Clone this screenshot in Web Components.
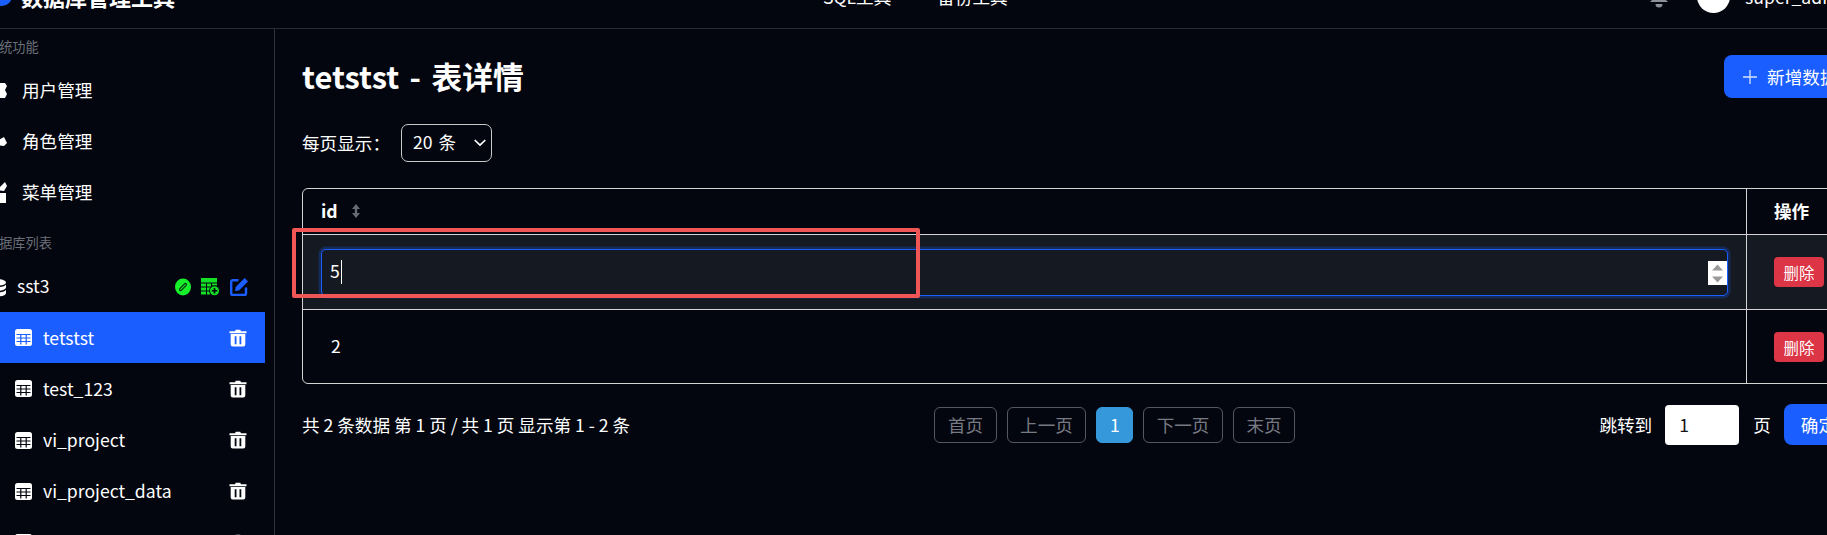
<!DOCTYPE html>
<html lang="zh">
<head>
<meta charset="utf-8">
<title>tetstst - 表详情</title>
<style>
  html, body { margin: 0; height: 535px; overflow: hidden; background: #03060f; }
  body { color: #fff; font-family: "Noto Sans CJK SC", "Noto Sans", sans-serif; font-size: 17.6px; }
</style>
</head>
<body>
<app-shell>
  <app-header slot="header"></app-header>
  <side-bar slot="side"></side-bar>
  <table-page slot="main"></table-page>
</app-shell>

<script>
const icons = {
  table: (line) => `<svg width="17" height="17" viewBox="0 0 17 17"><rect width="17" height="17" rx="2.5" fill="#fff"/><path d="M1.5 5.5h14M1.5 9h14M1.5 12.5h14M5.8 5.5v10M11.2 5.5v10" stroke="${line}" stroke-width="1.2" fill="none"/></svg>`,
  trash: `<svg width="18" height="18" viewBox="0 0 18 18"><path d="M6 2.200 6.800.8h4.400l.8 1.400h5.500v2H.5v-2z" fill="#fff"/><path fill="#fff" fill-rule="evenodd" d="M1.700 5h14.600v10.600a2 2 0 0 1-2 2H3.700a2 2 0 0 1-2-2zM5.700 7.200v8h1.800v-8zm4.800 0v8h1.800v-8z"/></svg>`,
  link: `<svg width="16" height="18" viewBox="0 0 16 18"><ellipse cx="8" cy="9" rx="8" ry="8.500" fill="#16f02a"/><path d="M5.700 11.400l4.600-4.800" stroke="#0b2a12" stroke-width="3.400" stroke-linecap="round"/><path d="M5.700 11.400l4.600-4.800" stroke="#16f02a" stroke-width="1.200" stroke-linecap="round"/></svg>`,
  tablePlus: `<svg width="19" height="18" viewBox="0 0 19 18"><path fill="#14e026" fill-rule="evenodd" d="M0 0h16v4.500H0zM0 5.500h5v3H0zm6 0h4v3H6zm5 0h5v2h-5zM0 9.500h5v3H0zm6 0h3v3H6zM0 13.500h5v3H0zm6 0h3v3H6z"/><circle cx="13.500" cy="12.800" r="5" fill="#14e026" stroke="#03060f" stroke-width="1"/><path d="M13.500 10v5.600M10.700 12.800h5.600" stroke="#03060f" stroke-width="1.600"/></svg>`,
  edit: `<svg width="18" height="18" viewBox="0 0 18 18"><path d="M8.500 2.200H2.800A1.600 1.600 0 0 0 1.200 3.800v11.600A1.600 1.600 0 0 0 2.800 17h11.600a1.600 1.600 0 0 0 1.600-1.600V9.500" fill="none" stroke="#1a5eff" stroke-width="2.400"/><path d="M14.600 0 18 3.400 9 12.400l-4 .7.700-4z" fill="#1a5eff"/></svg>`,
  db: `<svg width="18" height="18" viewBox="0 0 18 18" fill="#fff"><ellipse cx="9" cy="3.400" rx="8" ry="3.200"/><path d="M1 5.600c1.200 1.800 4.400 2.600 8 2.600s6.800-.8 8-2.600v3c0 1.800-3.600 3.200-8 3.200s-8-1.400-8-3.200z"/><path d="M1 10.800c1.200 1.800 4.400 2.600 8 2.600s6.800-.8 8-2.600v3.400c0 1.800-3.600 3.200-8 3.200s-8-1.400-8-3.200z"/></svg>`,
  users: `<svg width="18" height="18" viewBox="0 0 18 18" fill="#fff"><path d="M8 2h8l2 3-2 4 2 4-2 4H8z"/></svg>`,
  role: `<svg width="18" height="18" viewBox="0 0 18 18" fill="#fff"><path d="M8 9l7-4 3 6-3 3-7-1z"/></svg>`,
  menu: `<svg width="18" height="22" viewBox="0 0 18 22" fill="#fff"><path d="M8 9l8-8 2 4-3 5z"/><path d="M8 12h9v10H8z"/></svg>`,
  plus: `<svg width="14" height="14" viewBox="0 0 14 14"><path d="M7 0v14M0 7h14" stroke="#d8e4ff" stroke-width="1.300"/></svg>`,
  chevron: `<svg width="12" height="8" viewBox="0 0 12 8"><path d="M1.200 1.500 6 6.200l4.800-4.700" fill="none" stroke="#fff" stroke-width="1.700" stroke-linecap="round" stroke-linejoin="round"/></svg>`,
  sort: `<svg width="8" height="14" viewBox="0 0 8 14" fill="#666a72"><path d="M4 0l4 5H5.200v4H8l-4 5-4-5h2.800V5H0z"/></svg>`,
  spin: `<svg width="19" height="24" viewBox="0 0 19 24"><rect width="19" height="24" fill="#fff"/><path d="M9.500 3.500 15 9.500H4zM4 15.500h11L9.500 21.500z" fill="#9a9a9a"/></svg>`,
  bell: `<svg width="20" height="22" viewBox="0 0 20 22" fill="#8b8f98"><path d="M10 0a6 6 0 0 0-6 6v6l-3 3h18l-3-3V6a6 6 0 0 0-6-6z"/><path d="M6.500 17h7a3.500 3.500 0 0 1-7 0z"/></svg>`,
  logo: `<svg width="26" height="20" viewBox="0 0 26 20"><path d="M0 0h26v10a10 10 0 0 1-10 10H0z" fill="#1a5eff"/></svg>`
};

class AppShell extends HTMLElement {
  constructor() {
    super();
    this.attachShadow({ mode: "open" }).innerHTML = `
      <style>
        :host { display: block; width: 1905px; margin: -36px 0 0 -25px; }
        .body { display: flex; height: 506px; overflow: hidden; }
      </style>
      <slot name="header"></slot>
      <div class="body"><slot name="side"></slot><slot name="main"></slot></div>`;
  }
}

class AppHeader extends HTMLElement {
  constructor() {
    super();
    this.attachShadow({ mode: "open" }).innerHTML = `
      <style>
        :host { display: flex; align-items: center; height: 64px; border-bottom: 1px solid #282b37; box-sizing: content-box; }
        .brand { display: flex; align-items: center; gap: 9px; width: 600px; padding-left: 11px; box-sizing: border-box; font-size: 22px; font-weight: 700; }
        nav { display: flex; gap: 46px; margin-left: 248px; }
        .user { display: flex; align-items: center; margin-left: auto; padding-right: 26px; }
        .user svg { margin-top: 3px; margin-right: 28px; }
        .avatar { width: 33px; height: 33px; border-radius: 50%; background: #fff; margin-right: 15px; }
      </style>
      <div class="brand">${icons.logo}<span>数据库管理工具</span></div>
      <nav><span>SQL工具</span><span>备份工具</span></nav>
      <div class="user">${icons.bell}<span class="avatar"></span><span>super_admin</span></div>`;
  }
}

class SideItem extends HTMLElement {
  constructor() {
    super();
    this.attachShadow({ mode: "open" }).innerHTML = `
      <style>
        :host { display: flex; align-items: center; height: 51.200px; color: #fff; }
        :host([active]) { background: #1a5eff; }
        .text { flex: 1; min-width: 0; padding-bottom: 1px; }
        .lead { display: flex; width: 28px; margin-left: 40px; }
        :host([kind="sys"]) .lead { margin-left: 14px; width: 33px; }
        .trail { display: flex; padding-right: 18px; }
      </style>
      <span class="lead"><slot name="icon"></slot></span>
      <span class="text"><slot></slot></span>
      <span class="trail"><slot name="action"></slot></span>`;
  }
}

class SideBar extends HTMLElement {
  constructor() {
    super();
    const tables = ["tetstst", "test_123", "vi_project", "vi_project_data", "vi_project_log"];
    this.attachShadow({ mode: "open" }).innerHTML = `
      <style>
        :host { display: block; flex: none; width: 300px; height: 100%; border-right: 1px solid #2f3340; box-sizing: border-box; padding-right: 9px; overflow: hidden; }
        .label { color: #6c6f78; font-size: 13.200px; line-height: 18px; padding-left: 11px; }
        .label.a { margin-top: 9px; margin-bottom: 8px; }
        .label.b { margin-top: 16px; margin-bottom: 13px; }
        .db { display: flex; align-items: center; height: 46.600px; padding: 0 17px 0 14px; gap: 8px; margin-bottom: 1px; }
        .db b { font-weight: 400; flex: 1; font-size: 17.600px; margin-left: 2px; padding-bottom: 5px; }
        .db .tools { display: flex; gap: 10px; align-items: center; padding-bottom: 1px; }
        svg { display: block; }
      </style>
      <div class="label a">系统功能</div>
      <side-item kind="sys"><span slot="icon">${icons.users}</span>用户管理</side-item>
      <side-item kind="sys"><span slot="icon">${icons.role}</span>角色管理</side-item>
      <side-item kind="sys"><span slot="icon">${icons.menu}</span>菜单管理</side-item>
      <div class="label b">数据库列表</div>
      <div class="db">${icons.db}<b>sst3</b><span class="tools">${icons.link}${icons.tablePlus}${icons.edit}</span></div>
      ${tables.map((t, i) => `<side-item ${i === 0 ? "active" : ""}><span slot="icon">${icons.table(i === 0 ? "#1a5eff" : "#03060f")}</span>${t}<span slot="action">${icons.trash}</span></side-item>`).join("")}`;
  }
}

class DataTable extends HTMLElement {
  constructor() {
    super();
    this.attachShadow({ mode: "open" }).innerHTML = `
      <style>
        :host { display: grid; grid-template-columns: 1fr 106px; grid-template-rows: 45px 75px 74px; border: 1px solid #d4d4d4; border-radius: 6px; overflow: hidden; }
        .c { display: flex; align-items: center; box-sizing: border-box; padding: 0 18px; border-top: 1px solid #d4d4d4; min-width: 0; }
        .c.h { border-top: 0; font-weight: 700; gap: 14px; padding-bottom: 2px; }
        .c.act { border-left: 1px solid #d4d4d4; padding: 0 0 0 27px; }
        .c.h.act { padding-bottom: 2px; }
        .edit { background: #151921; }
        .box { position: relative; flex: 1; height: 47px; box-sizing: border-box; border: 1px solid #1a5eff; border-radius: 5px; background: #151921; box-shadow: 0 0 0 2.500px rgba(26, 94, 255, .25); display: flex; align-items: center; padding-left: 8px; }
        .five { padding-bottom: 3px; }
        .caret { width: 1px; height: 24px; background: #fff; margin-left: 1px; }
        .spin { position: absolute; right: 0; top: 11px; display: block; }
        .del { width: 50px; height: 30px; border-radius: 4px; background: #dc3545; font-size: 15.400px; display: flex; align-items: center; justify-content: center; }
        .val { padding-left: 10px; padding-bottom: 3px; }
      </style>
      <div class="c h">id ${icons.sort}</div>
      <div class="c h act">操作</div>
      <div class="c edit"><div class="box"><span class="five">5</span><span class="caret"></span><span class="spin">${icons.spin}</span></div></div>
      <div class="c act edit"><span class="del">删除</span></div>
      <div class="c"><span class="val">2</span></div>
      <div class="c act"><span class="del">删除</span></div>`;
  }
}

class PagerBar extends HTMLElement {
  constructor() {
    super();
    this.attachShadow({ mode: "open" }).innerHTML = `
      <style>
        :host { display: flex; align-items: center; justify-content: space-between; height: 41px; }
        .pages { display: flex; gap: 10px; }
        .p { height: 36px; box-sizing: border-box; border: 1px solid #555861; border-radius: 6px; color: #777a82; padding: 0 12.500px; display: flex; align-items: center; }
        .p.on { background: #3498db; border-color: #3498db; color: #fff; padding: 0 12.500px; }
        .jump { display: flex; align-items: center; }
        .num { width: 74px; height: 40px; box-sizing: border-box; margin: 0 14px 0 13px; background: #fff; color: #111; border-radius: 4px; padding-left: 14px; display: flex; align-items: center; }
        .go { height: 41px; margin-left: 13px; background: #1a5eff; border-radius: 8px; padding: 0 17px; display: flex; align-items: center; }
      </style>
      <span>共 2 条数据 第 1 页 / 共 1 页 显示第 1 - 2 条</span>
      <div class="pages">
        <span class="p">首页</span><span class="p">上一页</span><span class="p on">1</span><span class="p">下一页</span><span class="p">末页</span>
      </div>
      <div class="jump"><span>跳转到</span><span class="num">1</span><span>页</span><span class="go">确定</span></div>`;
  }
}

class TablePage extends HTMLElement {
  constructor() {
    super();
    this.attachShadow({ mode: "open" }).innerHTML = `
      <style>
        :host { display: block; flex: 1; min-width: 0; padding: 26px 27px 0; position: relative; }
        .top { display: flex; align-items: center; justify-content: space-between; height: 43px; }
        h1 { margin: 0; font-size: 30.800px; line-height: 43px; font-weight: 700; word-spacing: 3.500px; padding-bottom: 2px; }
        .add { display: flex; align-items: center; gap: 10px; height: 43px; padding: 0 15.500px 0 19px; background: #1a5eff; border-radius: 8px; }
        .size { display: flex; align-items: center; gap: 11px; margin: 26px 0; height: 38px; }
        .size > span:first-child { padding-bottom: 2px; }
        .sel { display: flex; align-items: center; justify-content: space-between; width: 91px; height: 38px; box-sizing: border-box; border: 1px solid #c9c9c9; border-radius: 7px; padding: 0 5px 3px 11px; word-spacing: 2px; }
        .sel svg { margin-top: 3px; }
        pager-bar { margin-top: 20px; }
        .mark { position: absolute; left: 17px; top: 199px; width: 628px; height: 70px; box-sizing: border-box; border: 4px solid #f05656; border-radius: 2px; }
      </style>
      <div class="top"><h1>tetstst - 表详情</h1><span class="add">${icons.plus}新增数据</span></div>
      <div class="size"><span>每页显示：</span><span class="sel">20 条${icons.chevron}</span></div>
      <data-table></data-table>
      <pager-bar></pager-bar>
      <div class="mark"></div>`;
  }
}

customElements.define("app-shell", AppShell);
customElements.define("app-header", AppHeader);
customElements.define("side-item", SideItem);
customElements.define("side-bar", SideBar);
customElements.define("data-table", DataTable);
customElements.define("pager-bar", PagerBar);
customElements.define("table-page", TablePage);
</script>
</body>
</html>
